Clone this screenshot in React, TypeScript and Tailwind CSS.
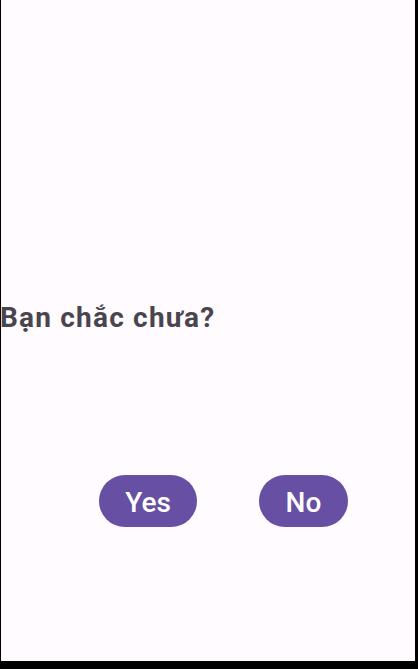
import React from "react"

const App: React.FC = () => {
  return (
    <div className="w-[418px] h-[669px] bg-[#fffbfe] border-l border-r-[3px] border-b-[8px] border-black font-['Roboto',sans-serif] flex flex-col">
      <div className="pt-[299px]">
        <h1 className="text-[28px] leading-[38px] font-bold tracking-[1.2px] text-[#49454f] -ml-[1px]">Bạn chắc chưa?</h1>
      </div>
      <div className="mt-[138px] flex pl-[98px] gap-[62px]">
        <button className="w-[98px] h-[52px] rounded-full bg-[#6750a4] text-white text-[28px] font-medium pt-[3px]">Yes</button>
        <button className="w-[89px] h-[52px] rounded-full bg-[#6750a4] text-white text-[28px] font-medium pt-[3px]">No</button>
      </div>
    </div>
  )
}

export default App
